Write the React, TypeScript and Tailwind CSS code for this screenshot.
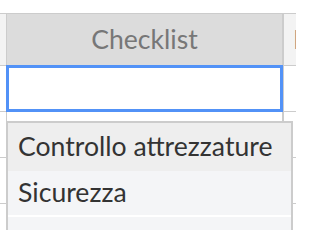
import React from "react";

const rows = [0, 1, 2, 3];
const options = ["Controllo attrezzature", "Sicurezza", ""];

export default function App() {
  return (
    <div className="relative w-[296px] h-[230px] overflow-hidden bg-white font-['Lato',sans-serif]">
      <div className="pt-[13px]">
        {/* header row */}
        <div className="flex h-[53px] border-y border-[#cccccc]">
          <div className="w-[7px] shrink-0 bg-[#f3f3f3] border-r border-[#cccccc]" />
          <div className="w-[277px] shrink-0 bg-[#dcdcdc] border-r-2 border-[#cccccc] flex items-center justify-center text-[26.6px] text-[#777777]">
            Checklist
          </div>
          <div className="flex-1 min-w-0 overflow-hidden bg-[#f3f3f3] flex items-center pl-[9px] text-[26.6px] text-[#777777] whitespace-nowrap">
            Data
          </div>
        </div>
        {/* body rows */}
        {rows.map((r) => (
          <div key={r} className="flex h-[46px] border-b border-[#cccccc]">
            <div className="w-[7px] shrink-0 border-r border-[#cccccc]" />
            <div className="w-[277px] shrink-0 border-r-2 border-[#cccccc]" />
            <div className="flex-1" />
          </div>
        ))}
      </div>

      {/* active editor */}
      <div className="absolute left-[6px] top-[65px] w-[277px] h-[47px] border-[3px] border-[#5292f7] bg-white" />

      {/* autocomplete dropdown */}
      <div className="absolute left-[6px] top-[121px] w-[287px] border-2 border-[#cccccc] bg-white">
        {options.map((opt, i) => (
          <div
            key={i}
            className={
              i === 0
                ? "h-[48px] flex items-center pl-[10px] bg-[#eeeeee] text-[26.6px] text-[#333333] whitespace-nowrap"
                : "h-[46px] flex items-center pl-[10px] bg-[#f4f5f7] border-b-2 border-white text-[26.6px] text-[#333333] whitespace-nowrap"
            }
          >
            {opt}
          </div>
        ))}
      </div>
    </div>
  );
}
